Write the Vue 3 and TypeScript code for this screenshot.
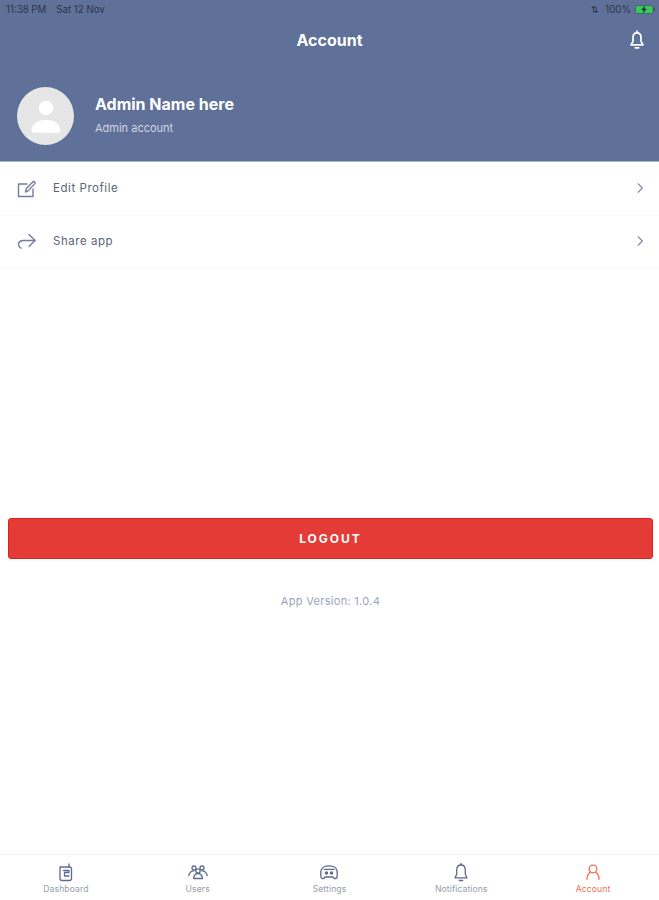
<script setup lang="ts">
const tabs = [
  { label: 'Dashboard', icon: 'dash' },
  { label: 'Users', icon: 'users' },
  { label: 'Settings', icon: 'game' },
  { label: 'Notifications', icon: 'bell' },
  { label: 'Account', icon: 'user' },
]
</script>

<template>
  <div class="page">
    <header class="head">
      <div class="status">
        <div class="status-left"><span>11:38 PM</span><span>Sat 12 Nov</span></div>
        <div class="status-right">
          <span class="net">⇅</span><span>100%</span>
          <svg width="20" height="9" viewBox="0 0 20 9">
            <rect x="0.5" y="0.5" width="17.500" height="8" rx="2.2" fill="#39c85a" stroke="#3f4a5c" stroke-width="0.6" />
            <rect x="18.500" y="3" width="1.300" height="3" rx="0.6" fill="#3f4a5c" />
            <path d="M10 0.4 6.300 5h2.300L7.700 8.600 11.800 3.800H9.300Z" fill="#1c2430" />
          </svg>
        </div>
      </div>
      <div class="title-row">
        <h1>Account</h1>
        <svg class="title-bell" width="16" height="20" viewBox="0 0 16 20" fill="none" stroke="#fff" stroke-width="1.7" stroke-linejoin="round" stroke-linecap="round">
          <path d="M8 2.800c-2.700 0-4 2-4 4.700v3.800L2 14.800h12l-2-3.500V7.500c0-2.700-1.300-4.700-4-4.700Z" />
          <path d="M8 1.200v1.600M6.300 17.800h3.400" />
        </svg>
      </div>
      <div class="profile">
        <div class="avatar">
          <svg width="34" height="36" viewBox="0 0 34 36" fill="#fff">
            <circle cx="17" cy="10" r="7.200" />
            <path d="M2.500 33c0-6.600 5.500-11 14.500-11s14.500 4.400 14.500 11c0 1.100-.8 1.700-1.800 1.700H4.300c-1 0-1.800-.6-1.800-1.700Z" />
          </svg>
        </div>
        <div class="who">
          <div class="name">Admin Name here</div>
          <div class="role">Admin account</div>
        </div>
      </div>
    </header>

    <main class="list">
      <div class="row">
        <svg class="row-icon" width="20" height="20" viewBox="0 0 20 20" fill="none" stroke="#717e9f" stroke-width="1.400" stroke-linejoin="round" stroke-linecap="round">
          <path d="M10 6H1.500v12.500H16V11" />
          <path d="M8.500 14l.7-3.200L16.500 3.300l1.800 1.800-7.200 7.800Z" />
        </svg>
        <span>Edit Profile</span>
        <svg class="chev" width="8" height="12" viewBox="0 0 8 12" fill="none" stroke="#7c87a3" stroke-width="1.200" stroke-linecap="round" stroke-linejoin="round"><path d="M2.300 1.800 6.300 6l-4 4.200" /></svg>
      </div>
      <div class="row">
        <svg class="row-icon" width="20" height="20" viewBox="0 0 20 20" fill="none" stroke="#717e9f" stroke-width="1.400" stroke-linejoin="round" stroke-linecap="round">
          <path d="M12 3.500 18 9.500l-6 6" />
          <path d="M18 9.500H6.500c-3 0-5 1.700-5 4 0 1.700 1 3 2.500 3.700" />
        </svg>
        <span>Share app</span>
        <svg class="chev" width="8" height="12" viewBox="0 0 8 12" fill="none" stroke="#7c87a3" stroke-width="1.200" stroke-linecap="round" stroke-linejoin="round"><path d="M2.300 1.800 6.300 6l-4 4.200" /></svg>
      </div>
    </main>

    <div class="logout-wrap">
      <button class="logout" type="button">LOGOUT</button>
      <div class="version">App Version: 1.0.4</div>
    </div>

    <nav class="tabs">
      <div v-for="t in tabs" :key="t.label" class="tab" :class="{ active: t.icon === 'user' }">
        <svg width="20" height="20" viewBox="0 0 20 20" fill="none" stroke="currentColor" stroke-width="1.300" stroke-linejoin="round" stroke-linecap="round">
          <template v-if="t.icon === 'dash'">
            <path d="M4 5h9.500a2 2 0 0 1 2 2v9.500a2 2 0 0 1-2 2H6a2 2 0 0 1-2-2Z" />
            <path d="M13 5V2M7.500 8.500h5.500v2H8.500v3.500H13" />
          </template>
          <template v-else-if="t.icon === 'users'">
            <circle cx="6" cy="6" r="2" /><circle cx="14" cy="6" r="2" /><circle cx="10" cy="9" r="2.100" />
            <path d="M.8 13.500C1.500 10.500 3.500 8.800 6 8.800M19.200 13.500c-.7-3-2.700-4.700-5.200-4.700M5.500 16.500c.5-3 2.200-5 4.500-5s4 2 4.500 5Z" />
          </template>
          <template v-else-if="t.icon === 'game'">
            <path d="M5.800 4.500c2.500-.8 5.900-.8 8.400 0 2.600.8 4 3 4 6.500v3c0 1.700-1.100 2.700-2.700 2.700l-1.500-1.700h-8l-1.500 1.700c-1.600 0-2.700-1-2.700-2.700v-3c0-3.500 1.400-5.700 4-6.500Z" />
            <path d="M5 7.300h10" />
            <circle cx="7.500" cy="11" r="1.100" fill="currentColor" /><circle cx="12.500" cy="11" r="1.100" fill="currentColor" />
          </template>
          <template v-else-if="t.icon === 'bell'">
            <path d="M10 3c-2.800 0-4.300 2.200-4.300 5v4.300L4 15.800h12l-1.700-3.500V8C14.300 5.200 12.800 3 10 3Z" />
            <path d="M10 1.300V3M8.300 18.500h3.400" />
          </template>
          <template v-else>
            <circle cx="10" cy="7" r="3.800" />
            <path d="M7 10.500C5 12 4 14.500 4 17.300M13 10.500c2 1.500 3 4 3 6.800" />
          </template>
        </svg>
        <span>{{ t.label }}</span>
      </div>
    </nav>
  </div>
</template>

<style>
html, body { margin: 0; background: #fff; }
</style>

<style scoped>
.page {
  width: 659px;
  height: 900px;
  display: flex;
  flex-direction: column;
  background: #fff;
  font-family: "Inter", "Liberation Sans", sans-serif;
  overflow: hidden;
}
.head {
  height: 161px;
  background: #5f7198;
  border-bottom: 1px solid #aab4c8;
  box-sizing: content-box;
  display: flex;
  flex-direction: column;
}
.status {
  height: 18px;
  padding: 0 4px 0 6px;
  display: flex;
  justify-content: space-between;
  align-items: center;
  font-size: 9.700px;
  color: #2b3549;
}
.status-left { display: flex; gap: 10px; }
.status-right { display: flex; align-items: center; gap: 4px; }
.net { font-size: 9px; margin-right: 2px; }
.title-row {
  height: 44px;
  position: relative;
  display: flex;
  align-items: center;
  justify-content: center;
}
h1 { margin: 0; font-size: 16px; font-weight: 700; color: #fff; }
.title-bell { position: absolute; right: 14px; top: 12px; }
.profile {
  margin-top: 25px;
  padding-left: 17px;
  display: flex;
  align-items: center;
  gap: 21px;
}
.who { padding-bottom: 4px; }
.avatar {
  width: 57px;
  height: 58px;
  border-radius: 50%;
  background: #e6e6e6;
  display: flex;
  align-items: center;
  justify-content: center;
}
.name { font-size: 16px; font-weight: 700; color: #fff; line-height: 20px; }
.role { font-size: 11px; color: #d0d6e2; margin-top: 7px; line-height: 14px; }
.list { display: flex; flex-direction: column; }
.row {
  height: 51px;
  padding: 0 15px 2px 17px;
  display: flex;
  align-items: center;
  gap: 16px;
  font-size: 11.500px;
  letter-spacing: 0.55px;
  color: #5c6478;
  border-bottom: 1px solid #fbfbfc;
  box-sizing: content-box;
}
.row + .row { height: 50px; }
.row-icon { flex: none; }
.chev { margin-left: auto; }
.logout-wrap {
  margin-top: 249px;
  padding: 0 6px 0 8px;
  display: flex;
  flex-direction: column;
  align-items: center;
}
.logout {
  width: 100%;
  height: 41px;
  border: 1px solid #dd2020;
  border-radius: 3px;
  background: #e53b37;
  color: #fff;
  font: 700 12px "Inter", "Liberation Sans", sans-serif;
  letter-spacing: 2px;
}
.version {
  margin-top: 35px;
  font-size: 11px;
  letter-spacing: 0.3px;
  color: #9aa3bb;
}
.tabs {
  margin-top: auto;
  height: 45px;
  border-top: 1px solid #f2f2f3;
  display: grid;
  grid-template-columns: repeat(5, 1fr);
}
.tab {
  display: flex;
  flex-direction: column;
  align-items: center;
  padding-top: 7px;
  gap: 2px;
  font-size: 8.600px;
  letter-spacing: 0.1px;
  color: #5f6b8c;
}
.tab span { color: #959cad; line-height: 11px; }
.tab.active, .tab.active span { color: #f0704f; }
</style>
